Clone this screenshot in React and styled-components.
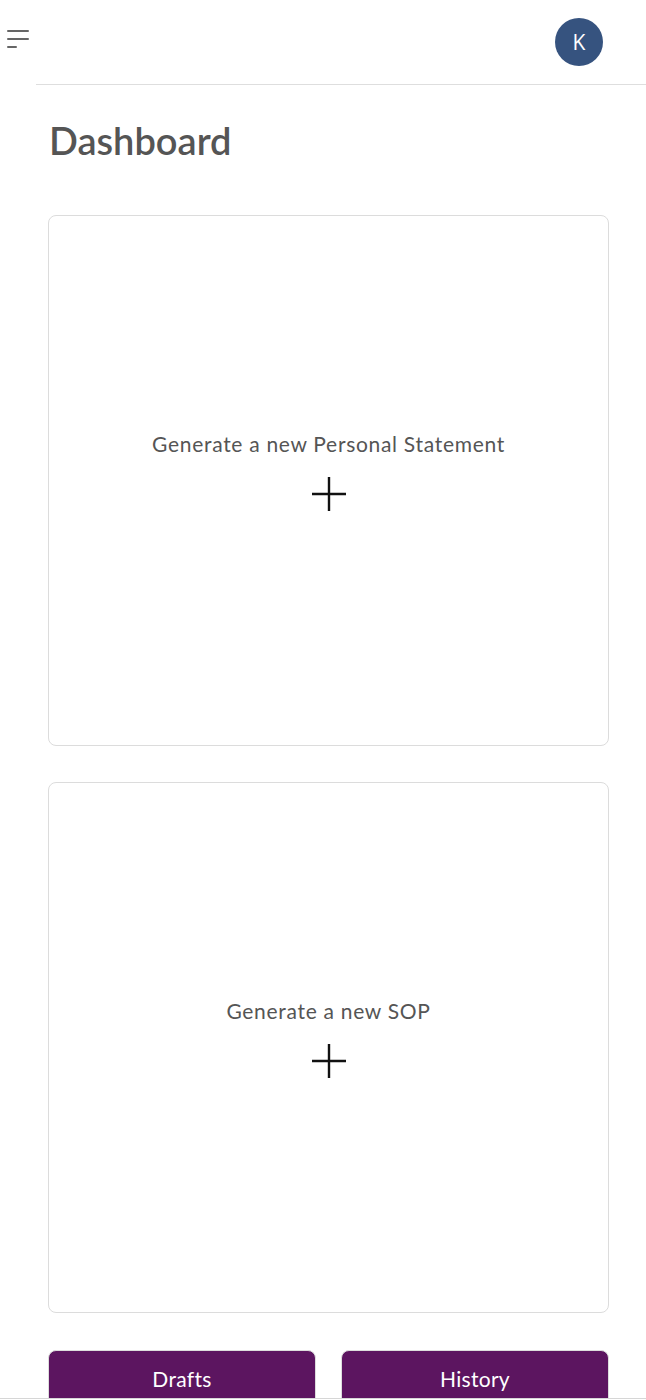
import React from 'react';
import styled, { createGlobalStyle } from 'styled-components';

const GlobalStyle = createGlobalStyle`
  html, body {
    margin: 0;
    padding: 0;
    background: #fff;
  }
  body {
    font-family: 'Lato', 'Open Sans', sans-serif;
  }
  * {
    box-sizing: border-box;
  }
`

const Page = styled.div`
  display: flex;
  width: 100%;
  height: 1400px;
  overflow: hidden;
`

const Sidebar = styled.div`
  width: 36px;
  flex-shrink: 0;
  padding-top: 30px;
  padding-left: 7px;
`

const MenuButton = styled.button`
  display: flex;
  flex-direction: column;
  gap: 6px;
  padding: 0;
  border: none;
  background: none;
  cursor: pointer;
`

const MenuLine = styled.span`
  display: block;
  width: ${props => props.short ? '10px' : '22px'};
  height: 2px;
  background: #666;
  border-radius: 1px;
`

const Main = styled.div`
  flex: 1;
  display: flex;
  flex-direction: column;
`

const Header = styled.header`
  height: 85px;
  flex-shrink: 0;
  display: flex;
  align-items: center;
  justify-content: flex-end;
  padding-right: 43px;
  padding-bottom: 1px;
  border-bottom: 1px solid #dedede;
`

const Avatar = styled.div`
  width: 48px;
  height: 48px;
  border-radius: 50%;
  background: #36537f;
  color: #fff;
  display: flex;
  align-items: center;
  justify-content: center;
  font-family: 'Open Sans', sans-serif;
  font-size: 21px;
`

const Content = styled.div`
  flex-shrink: 0;
  padding: 0 37px 0 12px;
`

const Title = styled.h1`
  margin: 33px 0 0 1px;
  font-family: 'Lato', sans-serif;
  font-size: 38px;
  font-weight: 600;
  line-height: 44px;
  color: #555;
`

const Cards = styled.div`
  display: flex;
  flex-direction: column;
  gap: 36px;
  margin-top: 53px;
`

const Card = styled.button`
  height: 531px;
  width: 100%;
  border: 1px solid #dcdcdc;
  border-radius: 8px;
  background: #fff;
  display: flex;
  flex-direction: column;
  align-items: center;
  justify-content: center;
  gap: 20px;
  padding: 0 0 18px;
  cursor: pointer;
`

const CardLabel = styled.span`
  font-family: 'Lato', sans-serif;
  font-size: 21px;
  letter-spacing: 0.7px;
  line-height: 24px;
  color: #555;
`

const Actions = styled.div`
  display: flex;
  gap: 25px;
  margin-top: 37px;
`

const ActionButton = styled.button`
  flex: 1;
  height: 60px;
  border: 1px solid #ddd;
  border-radius: 8px;
  background: #5c1560;
  color: #fff;
  font-family: 'Lato', sans-serif;
  font-size: 21px;
  letter-spacing: 0.3px;
  padding: 0 0 4px;
  cursor: pointer;
`

const BottomEdge = styled.div`
  position: fixed;
  left: 0;
  right: 0;
  bottom: 0;
  height: 2px;
  background: #fff;
  border-top: 1px solid #d6d6d6;
`

function Plus() {
  return (
    <svg width="36" height="36" viewBox="0 0 36 36">
      <path d="M18 1v34M1 18h34" stroke="#111" strokeWidth="2.4" fill="none" />
    </svg>
  )
}

export default function App() {
  return (
    <>
      <GlobalStyle/>
      <Page>
        <Sidebar>
          <MenuButton>
            <MenuLine/>
            <MenuLine/>
            <MenuLine short/>
          </MenuButton>
        </Sidebar>
        <Main>
          <Header>
            <Avatar>K</Avatar>
          </Header>
          <Content>
            <Title>Dashboard</Title>
            <Cards>
              <Card>
                <CardLabel>Generate a new Personal Statement</CardLabel>
                <Plus/>
              </Card>
              <Card>
                <CardLabel>Generate a new SOP</CardLabel>
                <Plus/>
              </Card>
            </Cards>
            <Actions>
              <ActionButton>Drafts</ActionButton>
              <ActionButton>History</ActionButton>
            </Actions>
          </Content>
        </Main>
      </Page>
      <BottomEdge/>
    </>
  )
}
